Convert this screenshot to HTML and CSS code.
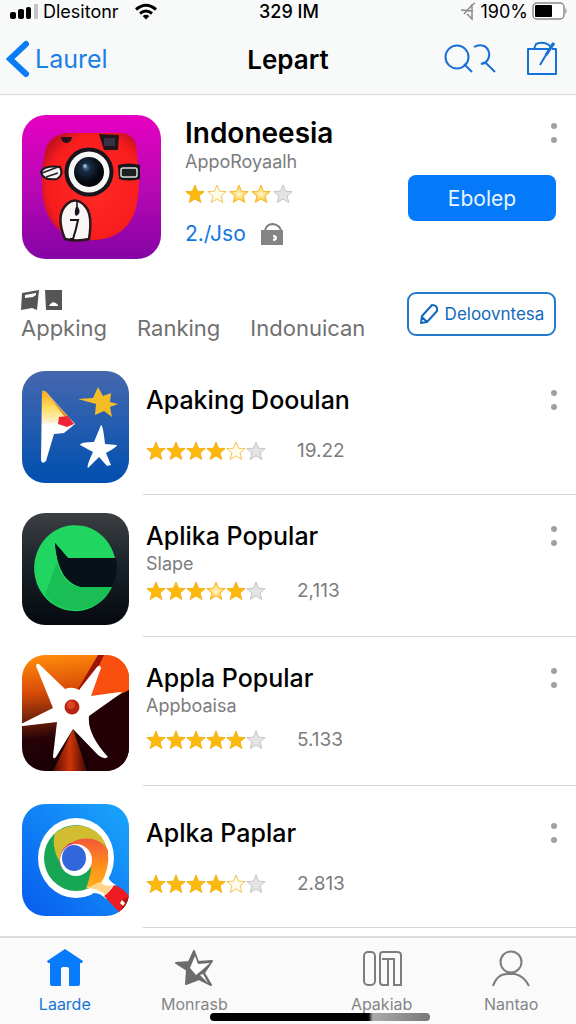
FILE: index.html
```
<!DOCTYPE html>
<html lang="id">
<head>
  <meta charset="UTF-8">
  <meta name="viewport" content="width=device-width, initial-scale=1.0">
  <title>Lepart</title>
  <link rel="stylesheet" href="styles.css">
</head>
<body>
  <!-- shared shapes -->
  <svg class="defs" width="0" height="0" aria-hidden="true">
    <defs>
      <radialGradient id="pale">
        <stop offset="0" stop-color="#fff6d0"/>
        <stop offset="1" stop-color="#fbc52c"/>
      </radialGradient>
    </defs>
    <symbol id="star" viewBox="0 0 20 20">
      <path d="M10 1l2.5 6.2 6.7.4-5.1 4.3 1.7 6.6L10 14.9l-5.8 3.6 1.7-6.6L.8 7.6l6.7-.4z" stroke-linejoin="round"/>
    </symbol>
    <symbol id="dots" viewBox="0 0 8 22">
      <circle cx="4" cy="4" r="3"/><circle cx="4" cy="18" r="3"/>
    </symbol>
  </svg>

  <header class="top">
    <div class="status">
      <div class="status-left">
        <svg width="29" height="16" viewBox="0 0 29 16"><rect x="0" y="9" width="6" height="7" rx="2"/><rect x="8" y="6" width="6" height="10" rx="2"/><rect x="16" y="4" width="5" height="12" rx="2"/><rect x="24" y="1" width="4" height="15" rx="1" fill="#c4c4c6"/></svg>
        <span>Dlesitonr</span>
        <svg class="wifi" width="22" height="17" viewBox="0 0 22 17" fill="none" stroke="#000" stroke-width="3"><path d="M1 6.500q10-8.500 20 0M5 10.500q6-5 12 0"/><path d="M11 16.500l-3.400-3.600q3.400-2.500 6.800 0z" fill="#000" stroke="none"/></svg>
      </div>
      <span class="clock">329 IM</span>
      <div class="status-right">
        <svg width="16" height="20" viewBox="0 0 16 20" fill="none" stroke="#8a8a8a" stroke-width="1.500"><path d="M1 9l12 1M12 3v15l-5-5M15 2l-3 2-8 9"/></svg>
        <span>190%</span>
        <svg width="36" height="18" viewBox="0 0 36 18"><rect x="1" y="1" width="31" height="16" rx="4" fill="#fff" stroke="#8b8b8b" stroke-width="1.500"/><rect x="3" y="3" width="17" height="12" rx="1"/><path d="M33.500 6q2 3 0 6z" fill="#777"/></svg>
      </div>
    </div>
    <div class="nav">
      <a class="back" href="#">
        <svg width="24" height="38" viewBox="0 0 24 38"><path d="M20 4L4 19l16 15" fill="none" stroke="#0a7cf5" stroke-width="6" stroke-linecap="round"/></svg>
        <span>Laurel</span>
      </a>
      <h1>Lepart</h1>
      <div class="nav-actions">
        <button class="plain" aria-label="Cari">
          <svg width="52" height="30" viewBox="0 0 52 30" fill="none" stroke="#1670d8" stroke-width="2"><circle cx="13" cy="13" r="11.500"/><path d="M20 20l8 8M30 3q5-3 10-1c6 3 7 11 2 16l-5 2 5-1 9 9"/></svg>
        </button>
        <button class="plain" aria-label="Tulis">
          <svg width="32" height="36" viewBox="0 0 32 36" fill="none" stroke="#1670d8" stroke-width="2"><path d="M24 8H2v25h28V8h-4M8 8l2-5q7-3 13 1l2 2M27 2L14 24" stroke-linejoin="round"/><path d="M28 2l-8 12" stroke-width="3"/></svg>
        </button>
      </div>
    </div>
  </header>

  <main>
    <section class="hero">
      <svg class="hero-icon" viewBox="0 0 139 144">
        <defs>
          <linearGradient id="purple" x1="0" y1="0" x2="0" y2="1"><stop offset="0" stop-color="#e600c2"/><stop offset=".5" stop-color="#b808b4"/><stop offset="1" stop-color="#8503a5"/></linearGradient>
          <radialGradient id="red" cx=".55" cy=".5" r=".6"><stop offset="0" stop-color="#ff2a25"/><stop offset=".8" stop-color="#f81d1d"/><stop offset="1" stop-color="#c71022"/></radialGradient>
          <radialGradient id="lens" cx=".4" cy=".35"><stop offset="0" stop-color="#54799a"/><stop offset=".3" stop-color="#172b42"/><stop offset="1" stop-color="#05070d"/></radialGradient>
        </defs>
        <rect width="139" height="144" rx="24" fill="url(#purple)"/>
        <path d="M44 18h54q16 0 17 19l2 28q0 30-10 43-12 16-34 17-17 1-30-6-18-11-22-35-3-25 2-47 3-16 21-19z" fill="url(#red)"/>
        <path d="M39 22h11q-1 6-6 6-5-1-5-6zM77 19l20 1-1 15H82z" fill="#241318"/>
        <path d="M82 23h11v8H82z" fill="#383044"/>
        <circle cx="67" cy="57" r="24.500" fill="#17141b"/>
        <circle cx="67" cy="57" r="20.500" fill="#f8f8f7"/>
        <circle cx="67" cy="57" r="15" fill="url(#lens)"/>
        <circle cx="63" cy="51" r="2" fill="#8daac0"/>
        <path d="M19 57q3-7 19-5 4 8-3 12-14 2-16-7z" fill="#f4f2ee" stroke="#181319" stroke-width="2"/>
        <path d="M20 58l16-6M24 62l12-4" stroke="#26202a" stroke-width="1.500"/>
        <path d="M96 50q11-3 22 0v14q-12 3-21 0z" fill="#171519"/>
        <rect x="99" y="53" width="16" height="9" rx="2" fill="#1b211e" stroke="#ddd" stroke-width="1.500"/>
        <path d="M43 124q-10-24 2-35 9-8 18 2 8 8 4 33-12 3-24 0z" fill="#f8f6f4" stroke="#2c171d" stroke-width="2.500"/>
        <path d="M55 85v6" stroke="#17131a" stroke-width="1.500"/>
        <path d="M55 90q-4 7-1 11 5-2 3-7z" fill="#17131a"/>
        <path d="M48 105h8q-2 10-5 19M48 124h4" fill="none" stroke="#17131a" stroke-width="2"/>
      </svg>
      <div class="hero-info">
        <div class="line">
          <h2>Indoneesia</h2>
          <button class="plain more" aria-label="Lainnya"><svg><use href="#dots"/></svg></button>
        </div>
        <p class="maker">AppoRoyaalh</p>
        <div class="hero-body">
          <div class="score">
            <div class="stars wide" role="img" aria-label="4 dari 5">
              <svg class="full"><use href="#star"/></svg><svg class="hollow"><use href="#star"/></svg><svg class="light"><use href="#star"/></svg><svg class="light"><use href="#star"/></svg><svg class="none"><use href="#star"/></svg>
            </div>
            <div class="price">
              <a href="#">2./Jso</a>
              <svg width="24" height="24" viewBox="0 0 24 24"><path d="M5 9q1-7 8-7 7 1 8 7" fill="none" stroke="#7e7e7e" stroke-width="2"/><path d="M1 8h22v15H1z" fill="#858585"/><path d="M13 13q4 0 4 3t-4 3v-2l2-1-2-1z" fill="#fff"/></svg>
            </div>
          </div>
          <button class="primary">Ebolep</button>
        </div>
      </div>
    </section>

    <nav class="filters">
      <a href="#">
        <svg width="46" height="20" viewBox="0 0 46 20" fill="#555"><path d="M1 3l17-3-2 20-5-2-11 2zM24 0h17v20H25z"/><path d="M4 5l11-2v2l-3 2-8 1zM28 16q4-7 9-1v1z" fill="#fff"/></svg>
        Appking
      </a>
      <a href="#">Ranking</a>
      <a href="#">Indonuican</a>
      <button class="outline">
        <svg width="20" height="22" viewBox="0 0 20 22" fill="none" stroke="#1268bd" stroke-width="2" stroke-linejoin="round"><path d="M13 2q6 0 5 6L8 19l-6 1 1-7zM3 14l5 5"/></svg>
        Deloovntesa
      </button>
    </nav>

    <ul class="apps">
      <li class="app">
        <svg class="app-icon" viewBox="0 0 107 112">
          <defs><linearGradient id="blue" x1="0" y1="0" x2="0" y2="1"><stop offset="0" stop-color="#4568ae"/><stop offset="1" stop-color="#004fb0"/></linearGradient>
          <linearGradient id="flag" x1="0" y1="0" x2="0" y2="1"><stop offset="0" stop-color="#ffa51c"/><stop offset=".5" stop-color="#ffdc59"/><stop offset="1" stop-color="#fff4e0"/></linearGradient></defs>
          <rect width="107" height="112" rx="23" fill="url(#blue)"/>
          <path d="M20 21q1-3 5 1l28 31-11 9-10 1-8 27q-4 4-5-1z" fill="#fff"/>
          <path d="M20 21q1-3 5 1l20 25-9 5-16 1z" fill="url(#flag)"/>
          <path d="M26 24l19 20 7 9-7-4z" fill="#d9932f"/>
          <path d="M37 46l9-1 6 8-7 3-9-3z" fill="#ef2438"/>
          <path d="M56 28l15-1 5-11 5 9 8-3-1 9 8 2-8 3 2 10-8-6-9 4 1-11z" fill="#f4bd28"/>
          <path d="M79 54q2 0 4 19l12 1q0 2-11 8l5 12-4 1-8-9-11 11q-2-1 5-16l-13-7q0-3 14-3z" fill="#fff"/>
        </svg>
        <div class="app-info no-maker">
          <div class="line">
            <h3>Apaking Dooulan</h3>
            <button class="plain more" aria-label="Lainnya"><svg><use href="#dots"/></svg></button>
          </div>
          <div class="rating">
            <div class="stars" role="img" aria-label="4,5 dari 6"><svg class="full"><use href="#star"/></svg><svg class="full"><use href="#star"/></svg><svg class="full"><use href="#star"/></svg><svg class="full"><use href="#star"/></svg><svg class="hollow"><use href="#star"/></svg><svg class="none"><use href="#star"/></svg></div>
            <span>19.22</span>
          </div>
        </div>
      </li>
      <li class="app">
        <svg class="app-icon" viewBox="0 0 107 112">
          <defs><linearGradient id="dark" x1="0" y1="0" x2="0" y2="1"><stop offset="0" stop-color="#3c3e42"/><stop offset=".5" stop-color="#172127"/><stop offset="1" stop-color="#05090f"/></linearGradient></defs>
          <rect width="107" height="112" rx="23" fill="url(#dark)"/>
          <path d="M93 45A41 43 0 1 0 90 74H59Q36 69 33 30L46 45z" fill="#20d660"/>
          <path d="M35 49Q40 72 59 74H90A41 43 0 0 1 23 82z" fill="#16ae4e" opacity=".6"/>
          <path d="M33 30l13 15h48q3 16-4 29H59Q36 69 33 30z" fill="#061118"/>
        </svg>
        <div class="app-info">
          <div class="line">
            <h3>Aplika Popular</h3>
            <button class="plain more" aria-label="Lainnya"><svg><use href="#dots"/></svg></button>
          </div>
          <p class="maker">Slape</p>
          <div class="rating">
            <div class="stars" role="img" aria-label="5 dari 6"><svg class="full"><use href="#star"/></svg><svg class="full"><use href="#star"/></svg><svg class="full"><use href="#star"/></svg><svg class="light"><use href="#star"/></svg><svg class="full"><use href="#star"/></svg><svg class="none"><use href="#star"/></svg></div>
            <span>2,113</span>
          </div>
        </div>
      </li>
      <li class="app tall">
        <svg class="app-icon" viewBox="0 0 107 116">
          <defs><clipPath id="round"><rect width="107" height="116" rx="23"/></clipPath>
          <linearGradient id="fire" x1=".3" y1="0" x2=".4" y2="1"><stop offset="0" stop-color="#ff8a0a"/><stop offset=".3" stop-color="#d94c08"/><stop offset=".7" stop-color="#260208"/><stop offset="1" stop-color="#160005"/></linearGradient>
          <linearGradient id="beam" x1="0" y1="0" x2="1" y2="0"><stop offset="0" stop-color="#4e0906"/><stop offset=".5" stop-color="#d03608"/><stop offset="1" stop-color="#3a0606"/></linearGradient></defs>
          <g clip-path="url(#round)">
            <rect width="107" height="116" fill="url(#fire)"/>
            <path d="M78 0L58 32 66 50 107 36V0z" fill="#f95010"/>
            <path d="M76 0h6L63 40l-7-6z" fill="#9b1408"/>
            <path d="M107 35L66 56v60h41z" fill="#220006"/>
            <path d="M51 74L31 116h34z" fill="url(#beam)"/>
          </g>
          <path d="M14 11q1-4 4-1l25 24q7-3 14 1l18-23q3-3 4 1L69 41l29-4q3 0 0 2L67 61q-2 18 19 41-4 3-10-2L51 74 34 102q-3 3-3-1l4-34-34 4q-4-1 0-3l30-15z" fill="#fff"/>
          <circle cx="50" cy="52" r="7.500" fill="#b72413"/><circle cx="49" cy="50" r="4" fill="#dd4323"/>
        </svg>
        <div class="app-info">
          <div class="line">
            <h3>Appla Popular</h3>
            <button class="plain more" aria-label="Lainnya"><svg><use href="#dots"/></svg></button>
          </div>
          <p class="maker">Appboaisa</p>
          <div class="rating">
            <div class="stars" role="img" aria-label="5 dari 6"><svg class="full"><use href="#star"/></svg><svg class="full"><use href="#star"/></svg><svg class="full"><use href="#star"/></svg><svg class="full"><use href="#star"/></svg><svg class="full"><use href="#star"/></svg><svg class="none"><use href="#star"/></svg></div>
            <span>5.133</span>
          </div>
        </div>
      </li>
      <li class="app">
        <svg class="app-icon" viewBox="0 0 107 112">
          <defs><linearGradient id="sky" x1="1" y1="0" x2="0" y2="1"><stop offset="0" stop-color="#1aa7fc"/><stop offset="1" stop-color="#075bee"/></linearGradient>
          <linearGradient id="orange" x1="0" y1="0" x2="0" y2="1"><stop offset="0" stop-color="#f5573a"/><stop offset=".6" stop-color="#ff9419"/><stop offset="1" stop-color="#ffb01e"/></linearGradient>
          <clipPath id="round2"><rect width="107" height="112" rx="23"/></clipPath></defs>
          <rect width="107" height="112" rx="23" fill="url(#sky)"/>
          <path d="M84 68q2 9 10 13l-10 14q-6-7-14-6z" fill="#fff"/>
          <ellipse cx="54" cy="54" rx="38" ry="40" fill="#fff"/>
          <ellipse cx="54" cy="54" rx="32" ry="33" fill="#17a653"/>
          <path d="M33 29q20-14 40-2 12 8 13 26L54 45 42 65q-14-20-9-36z" fill="#d1bd31"/>
          <path d="M38 56q2-16 20-21 20-3 28 11 2 20-8 35l-14 4q3-9 5-18 0-20-16-25-10 2-15 14z" fill="url(#orange)"/>
          <path d="M64 84l14-6q6 6 13 3l-7 10q-8-7-20-7z" fill="#ffd487"/>
          <path d="M39 64q-5-16 9-25l16 4q-18-2-22 21z" fill="#d33672"/>
          <circle cx="54" cy="56" r="16" fill="#fff"/>
          <ellipse cx="52" cy="54" rx="12" ry="13" fill="#3267db"/>
          <g clip-path="url(#round2)"><path d="M92 81q8 2 15 11v18l-9-1-16-17q6-4 10-11z" fill="#ee1c20"/><path d="M98 97l9-4v14l-7-2z" fill="#ae1517"/><path d="M100 96l3 3-2 3-3-3z" fill="#fff"/></g>
        </svg>
        <div class="app-info no-maker">
          <div class="line">
            <h3>Aplka Paplar</h3>
            <button class="plain more" aria-label="Lainnya"><svg><use href="#dots"/></svg></button>
          </div>
          <div class="rating">
            <div class="stars" role="img" aria-label="4,5 dari 6"><svg class="full"><use href="#star"/></svg><svg class="full"><use href="#star"/></svg><svg class="full"><use href="#star"/></svg><svg class="full"><use href="#star"/></svg><svg class="hollow"><use href="#star"/></svg><svg class="none"><use href="#star"/></svg></div>
            <span>2.813</span>
          </div>
        </div>
      </li>
    </ul>
  </main>

  <nav class="tabbar">
    <a class="active" href="#">
      <svg width="38" height="38" viewBox="0 0 38 38"><path d="M19 0l18 12-1 2h-2v21q0 2-2 2h-9V20q0-2-2-2h-4q-2 0-2 2v17H6q-2 0-2-2V14H2l-1-2z" fill="#087bfc"/></svg>
      Laarde
    </a>
    <a href="#">
      <svg width="38" height="38" viewBox="0 0 38 38" stroke="#6c6c6e" stroke-width="2" stroke-linejoin="round"><path d="M19 2l4 11 14-1-8 12 7 12-12-6-13 5 1-14L1 14l13-1z" fill="#6c6c6e"/><path d="M20 7l3 8 12-1-9 8-5 4-6-7z" fill="#fff" stroke="none"/><path d="M28 25l5 9-8-8z" fill="#fff" stroke="none"/></svg>
      Monrasb
    </a>
    <a class="right" href="#">
      <svg width="40" height="38" viewBox="0 0 40 38" fill="none" stroke="#7d7d7f" stroke-width="2"><rect x="2" y="3" width="11" height="33" rx="4"/><path d="M26 10v26h-5q-3 0-3-3V6q0-3 3-3h14q4 0 4 3v30h-7V10H20"/></svg>
      Apakiab
    </a>
    <a href="#">
      <svg width="40" height="38" viewBox="0 0 40 38" fill="none" stroke="#7d7d7f" stroke-width="2"><circle cx="20" cy="13" r="10.500"/><path d="M2 37q4-12 14-12h8q9 2 14 12"/></svg>
      Nantao
    </a>
    <span class="home-bar"></span>
  </nav>
</body>
</html>
```
FILE: styles.css
```
* { box-sizing: border-box; }
body { font-family: Inter, "Liberation Sans", sans-serif; background-color: #ffffff; color: #000000; margin: 0; display: flex; flex-direction: column; min-height: 100vh; }
h1, h2, h3, p, ul { margin: 0; padding: 0; }
svg { display: block; flex-shrink: 0; }
a { color: inherit; text-decoration: none; }
button { font-family: inherit; cursor: pointer; }
.defs { position: absolute; }
.plain { background: none; border: none; padding: 0; }

.top { background-color: #f8f9f9; border-bottom: 1px solid #d8d8d8; }
.status { display: grid; grid-template-columns: 1fr auto 1fr; align-items: center; height: 22px; padding: 0 8px 0 10px; font-size: 18px; }
.status-left, .status-right { display: flex; align-items: center; gap: 4px; }
.status-right { justify-content: flex-end; }
.wifi { margin-left: 12px; }
.clock { font-weight: 500; }
.nav { display: grid; grid-template-columns: 1fr auto 1fr; align-items: center; height: 72px; padding: 2px 18px 0 18px; }
.back { display: flex; align-items: center; gap: 5px; margin-left: -12px; color: #1b7fe8; font-size: 25px; }
.nav h1 { font-size: 26px; font-weight: 600; }
.nav-actions { display: flex; justify-content: flex-end; align-items: center; gap: 30px; }

.hero { display: flex; gap: 24px; padding: 20px 20px 0 22px; }
.hero-icon { width: 139px; height: 144px; }
.hero-info { flex: 1; }
.line { display: flex; justify-content: space-between; align-items: center; }
.more { width: 8px; height: 22px; margin-right: -2px; }
.more svg { width: 8px; height: 22px; fill: #a0a0a0; }
h2 { font-size: 28px; line-height: 36px; font-weight: 600; }
h3 { font-size: 25px; line-height: 28px; font-weight: 500; }
.maker { font-size: 18px; line-height: 22px; color: #7c7c7e; }
.hero-body { display: flex; justify-content: space-between; align-items: flex-start; padding-top: 2px; }
.score { padding-top: 8px; }
.price { display: flex; align-items: center; gap: 14px; margin-top: 18px; font-size: 21px; line-height: 24px; color: #1277df; }
.primary { width: 148px; height: 46px; background-color: #047afb; color: #e8f5ff; border: none; border-radius: 8px; font-size: 21px; }

.stars { display: flex; padding-top: 1px; }
.stars svg { width: 20px; height: 20px; }
.wide { gap: 2px; }
.full { fill: #fcb90c; stroke: #f3b21c; }
.light { fill: url(#pale); stroke: #f5b929; }
.hollow { fill: #fffbe9; stroke: #f3c558; }
.none { fill: #e4e4e6; stroke: #c5c5c8; }

.filters { display: flex; align-items: flex-end; gap: 30px; padding: 31px 20px 12px 21px; color: #707070; font-size: 22px; line-height: 26px; }
.filters svg { margin-bottom: 5px; }
.outline { display: flex; align-items: center; justify-content: center; gap: 6px; width: 149px; height: 44px; margin: 0 0 5px auto; padding: 0; background-color: #ffffff; color: #1268bd; border: 2px solid #2379ca; border-radius: 9px; font-size: 17px; }
.filters .outline svg { margin: 0; }

.apps { list-style: none; }
.app { display: flex; min-height: 142px; }
.tall { min-height: 149px; }
.app-icon { width: 107px; height: 112px; margin: 18px 14px 12px 22px; }
.tall .app-icon { height: 116px; }
.app-info { flex: 1; padding: 27px 20px 0 3px; border-bottom: 1px solid #d6d6d6; }
.no-maker { padding-top: 33px; }
.app .maker { line-height: 28px; }
.rating { display: flex; align-items: center; gap: 31px; height: 24px; color: #7c7c7e; font-size: 19px; }
.no-maker .rating { margin-top: 24px; }
.tall .rating { margin-top: 7px; }

.tabbar { position: relative; display: grid; grid-template-columns: 9fr 9fr 4fr 9fr 9fr; margin-top: auto; height: 88px; padding-top: 11px; background-color: #fafafa; border-top: 2px solid #dcdcdd; color: #858587; font-size: 16px; line-height: 20px; }
.tabbar a { display: flex; flex-direction: column; align-items: center; gap: 7px; }
.tabbar .active { color: #1676d2; }
.tabbar .right { grid-column: 4; }
.home-bar { position: absolute; left: 50%; bottom: 3px; width: 220px; height: 8px; margin-left: -78px; border-radius: 4px; background: linear-gradient(90deg, #000 72%, #aaa 74%, #777); }
```
